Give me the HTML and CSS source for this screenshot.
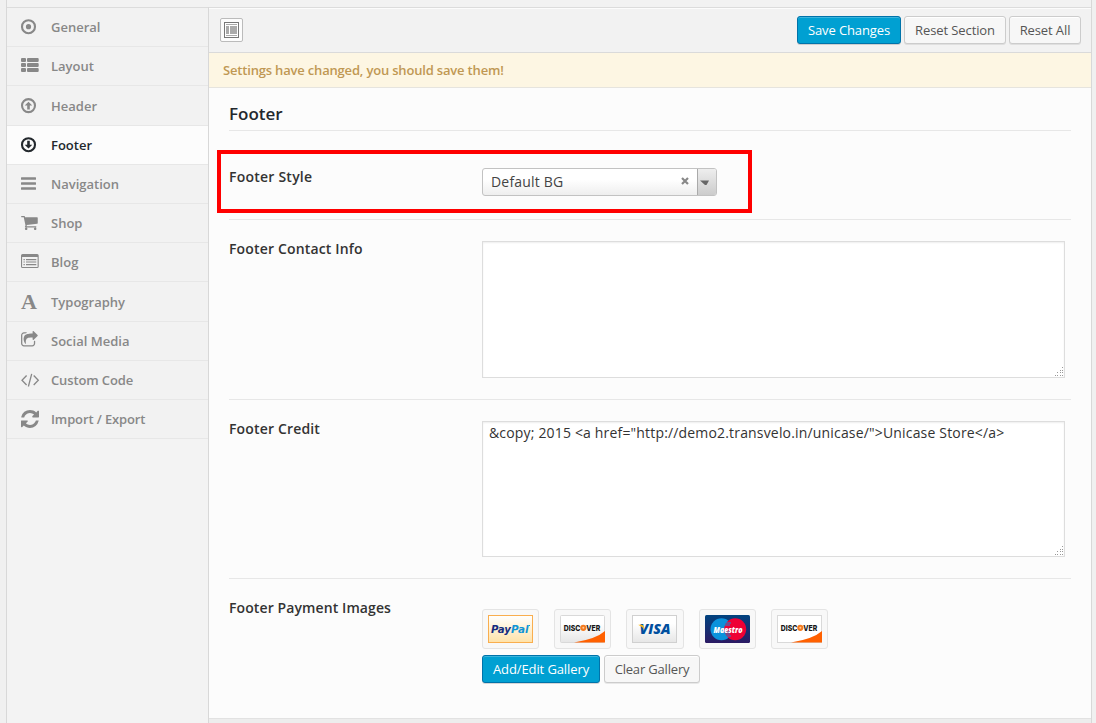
FILE: index.html
```html
<!DOCTYPE html>
<html lang="en">
<head>
<meta charset="utf-8">
<title>Theme Options</title>
<link rel="stylesheet" href="styles.css">
</head>
<body>
<div class="panel">
  <nav class="sidebar">
    <a class="item"><svg class="icon" viewBox="0 0 20 20"><circle class="line" cx="8.5" cy="9.7" r="6.5"/><circle cx="8.5" cy="9.7" r="2.6"/></svg><span>General</span></a>
    <a class="item"><svg class="icon" viewBox="0 0 20 20"><rect x="1" y="2" width="5" height="4" rx="1"/><rect x="7" y="2" width="11.700" height="4" rx="1"/><rect x="1" y="7" width="5" height="4" rx="1"/><rect x="7" y="7" width="11.700" height="4" rx="1"/><rect x="1" y="12" width="5" height="4" rx="1"/><rect x="7" y="12" width="11.700" height="4" rx="1"/></svg><span>Layout</span></a>
    <a class="item tall"><svg class="icon" viewBox="0 0 20 20"><circle class="line" cx="8.5" cy="10.6" r="6.5"/><path d="M8.500 6.700l3.800 3.900H9.800v3.900H7.200v-3.900H4.700z"/></svg><span>Header</span></a>
    <a class="item active"><svg class="icon" viewBox="0 0 20 20"><circle class="line" cx="8.500" cy="9.700" r="6.500"/><path d="M8.500 13.600l3.800-3.900H9.800V5.800H7.200v3.900H4.700z"/></svg><span>Footer</span></a>
    <a class="item"><svg class="icon" viewBox="0 0 20 20"><rect x="1" y="3.300" width="15" height="2.500" rx=".5"/><rect x="1" y="8.300" width="15" height="2.500" rx=".5"/><rect x="1" y="13.300" width="15" height="2.500" rx=".5"/></svg><span>Navigation</span></a>
    <a class="item"><svg class="icon" viewBox="0 0 20 20"><path transform="translate(.4 .4) scale(.01004)" d="M704 1536q0 52-38 90t-90 38-90-38-38-90 38-90 90-38 90 38 38 90zm896 0q0 52-38 90t-90 38-90-38-38-90 38-90 90-38 90 38 38 90zm128-1088v512q0 24-16.500 42.500t-40.500 21.500l-1044 122q13 60 13 70 0 16-24 64h920q26 0 45 19t19 45-19 45-45 19h-1024q-26 0-45-19t-19-45q0-11 8-31.500t16-36 21.500-40 15.500-29.500l-177-823h-204q-26 0-45-19t-19-45 19-45 45-19h256q16 0 28.500 6.500t19.500 15.500 13 24.500 8 26 5.500 29.500 4.500 26h1201q26 0 45 19t19 45z"/></svg><span>Shop</span></a>
    <a class="item"><svg class="icon" viewBox="0 0 20 20"><path fill-rule="evenodd" d="M2.500 2h14.700q1.500 0 1.500 1.500v11q0 1.500-1.500 1.500H2.500Q1 16 1 14.500v-11Q1 2 2.500 2zM2.100 5.100v9.800h15.500V5.100z"/><path d="M3.500 7h1.300v1.200H3.500zM6 7h10.300v1.200H6zM3.500 9.400h1.300v1.200H3.500zM6 9.400h10.300v1.200H6zM3.500 12h1.300v1.200H3.500zM6 12h10.300v1.200H6z"/></svg><span>Blog</span></a>
    <a class="item tall"><span class="icon letter">A</span><span>Typography</span></a>
    <a class="item"><svg class="icon" viewBox="0 0 20 20"><path transform="translate(.4 0) scale(.01004)" d="M1472 989v259q0 119-84.500 203.500t-203.500 84.500h-832q-119 0-203.500-84.500t-84.500-203.500v-832q0-119 84.500-203.500t203.500-84.500h255q13 0 22.500 9.500t9.500 22.500q0 27-26 32-77 26-133 60-10 4-16 4h-112q-66 0-113 47t-47 113v832q0 66 47 113t113 47h832q66 0 113-47t47-113v-214q0-19 18-29 28-13 54-37 16-16 35-8 21 9 21 29zm237-496l-384 384q-18 19-45 19-12 0-25-5-39-17-39-59v-192h-160q-323 0-438 131-119 137-74 473 3 23-20 34-8 2-12 2-16 0-26-13-10-14-21-31t-39.500-68.500-49.500-99.500-38.500-114-17.500-122q0-49 3.500-91t14-90 28-88 47-81.500 68.500-74 94.500-61.500 124.500-48.500 159.500-30.500 196.500-11h160v-192q0-42 39-59 13-5 25-5 26 0 45 19l384 384q19 19 19 45t-19 45z"/></svg><span>Social Media</span></a>
    <a class="item"><svg class="icon" viewBox="0 0 20 20"><path class="thin" d="M6.600 5.500L2 10.300l4.600 4.700M13.700 5.500l4.600 4.800-4.600 4.700M11.700 3.900L8.400 16.500"/></svg><span class="narrow">Custom Code</span></a>
    <a class="item"><svg class="icon" viewBox="0 0 20 20"><path transform="translate(-.5 -.6) scale(.01172)" d="M1639 1056q0 5-1 7-64 268-268 434.500t-478 166.500q-146 0-282.500-55t-243.500-157l-129 129q-19 19-45 19t-45-19-19-45v-448q0-26 19-45t45-19h448q26 0 45 19t19 45-19 45l-137 137q71 66 161 102t187 36q134 0 250-65t186-179q11-17 53-117 8-23 30-23h192q13 0 22.500 9.500t9.500 22.500zm25-800v448q0 26-19 45t-45 19h-448q-26 0-45-19t-19-45 19-45l138-138q-148-137-349-137-134 0-250 65t-186 179q-11 17-53 117-8 23-30 23h-199q-13 0-22.500-9.500t-9.500-22.500v-7q65-268 270-434.500t480-166.500q146 0 284 55.500t245 156.500l130-129q19-19 45-19t45 19 19 45z"/></svg><span class="narrow">Import / Export</span></a>
  </nav>
  <main class="main">
    <header class="toolbar">
      <button class="expand"><svg width="15" height="16" viewBox="0 0 15 16"><rect class="frame" x=".5" y=".5" width="14" height="15"/><path class="blocks" d="M2 2h11v1H2zM2 4h3v8H2zM6 4h7v8H6zM2 13h11v1H2z"/></svg></button>
      <div class="actions">
        <button class="btn primary save">Save Changes</button>
        <button class="btn section">Reset Section</button>
        <button class="btn all">Reset All</button>
      </div>
    </header>
    <div class="notice">Settings have changed, you should save them!</div>
    <section class="content">
      <h2 class="title">Footer</h2>
      <div class="row style-row">
        <div class="highlight"></div>
        <div class="label">Footer Style</div>
        <div class="select">
          <span class="value">Default BG</span>
          <svg class="clear" width="8" height="8" viewBox="0 0 8 8"><path d="M1 1l6 6M7 1L1 7"/></svg>
          <span class="arrow"><svg width="9" height="6" viewBox="0 0 9 6"><path d="M0 .5h9L6.500 5H5z"/></svg></span>
        </div>
      </div>
      <div class="row contact-row">
        <div class="label">Footer Contact Info</div>
        <div class="field"><textarea class="area first"></textarea><svg class="grip" viewBox="0 0 10 10"><path d="M8 0h1v1H8zM6 3h1v1H6zM8 3h1v1H8zM3 5h1v1H3zM6 5h1v1H6zM8 5h1v1H8zM1 8h1v1H1zM3 8h1v1H3zM6 8h1v1H6zM8 8h1v1H8z"/></svg></div>
      </div>
      <div class="row credit-row">
        <div class="label">Footer Credit</div>
        <div class="field"><textarea class="area second" spellcheck="false">&amp;copy; 2015 &lt;a href="http://demo2.transvelo.in/unicase/"&gt;Unicase Store&lt;/a&gt;</textarea><svg class="grip" viewBox="0 0 10 10"><path d="M8 0h1v1H8zM6 3h1v1H6zM8 3h1v1H8zM3 5h1v1H3zM6 5h1v1H6zM8 5h1v1H8zM1 8h1v1H1zM3 8h1v1H3zM6 8h1v1H6zM8 8h1v1H8z"/></svg></div>
      </div>
      <div class="row payment-row">
        <div class="label">Footer Payment Images</div>
        <div class="gallery">
          <div class="thumbs">
            <div class="thumb"><svg class="card" viewBox="0 0 45 28">
              <defs>
                <linearGradient id="cream" x2="0" y2="1"><stop offset="0" stop-color="#fff"/><stop offset="1" stop-color="#ffe2a8"/></linearGradient>
                <linearGradient id="silver" x2="0" y2="1"><stop offset=".3" stop-color="#fff"/><stop offset="1" stop-color="#e6e6e6"/></linearGradient>
                <linearGradient id="navy" x2="0" y2="1"><stop offset="0" stop-color="#00437f"/><stop offset="1" stop-color="#2b1a63"/></linearGradient>
              </defs>
              <rect x=".5" y=".5" width="44" height="27" fill="url(#cream)" stroke="#f9ae4e"/>
              <text class="paypal" x="3" y="18" fill="#152c80" textLength="20" lengthAdjust="spacingAndGlyphs">Pay</text><text class="paypal" x="23" y="18" fill="#0f94d6" textLength="17.500" lengthAdjust="spacingAndGlyphs">Pal</text><path d="M41 10.500h1" stroke="#0f94d6"/>
            </svg></div>
            <div class="thumb"><svg class="card" viewBox="0 0 45 28"><rect x=".5" y=".5" width="44" height="27" rx="1" fill="url(#silver)" stroke="#d9d9d9"/><path d="M14 27.500Q36 24 45 16v11.500z" fill="#ff6000"/><text class="discover" x="3.800" y="15.700" textLength="16.500" lengthAdjust="spacingAndGlyphs">DISC</text><circle cx="23.300" cy="12.800" r="3.100" fill="#f47b20"/><circle cx="23.300" cy="12.800" r="1" fill="#ffc99a"/><text class="discover" x="26.300" y="15.700" textLength="14" lengthAdjust="spacingAndGlyphs">VER</text></svg></div>
            <div class="thumb"><svg class="card" viewBox="0 0 45 28"><rect x=".5" y=".5" width="44" height="27" fill="url(#silver)" stroke="#d0d0d0"/><text class="visa" x="7.500" y="19.300" textLength="31" lengthAdjust="spacingAndGlyphs">VISA</text><path d="M6.500 9.700h3.500l1.500 1.200.7 3.600q-1.500-3-5.700-4.500z" fill="#fdb913"/></svg></div>
            <div class="thumb"><svg class="card" viewBox="0 0 45 28"><rect width="45" height="28" rx="1.500" fill="url(#navy)"/><circle cx="16.500" cy="14.300" r="11" fill="#0b92dc"/><circle cx="30.200" cy="14.300" r="11" fill="#ee0035"/><path d="M21 8h5M20 10h5M20 17h5M20 19h5M21 21h5" stroke="#0b92dc"/><text class="maestro" x="8.500" y="17.500" textLength="29" lengthAdjust="spacingAndGlyphs">Maestro</text></svg></div>
            <div class="thumb"><svg class="card" viewBox="0 0 45 28"><rect x=".5" y=".5" width="44" height="27" fill="#fff" stroke="#d9d9d9"/><path d="M14 27.500Q36 24 45 16v11.500z" fill="#ff6000"/><text class="discover" x="3.800" y="15.700" textLength="16.500" lengthAdjust="spacingAndGlyphs">DISC</text><circle cx="23.300" cy="12.800" r="3.100" fill="#f47b20"/><circle cx="23.300" cy="12.800" r="1" fill="#ffc99a"/><text class="discover" x="26.300" y="15.700" textLength="14" lengthAdjust="spacingAndGlyphs">VER</text></svg></div>
          </div>
          <div class="gallery-actions">
            <button class="btn primary edit">Add/Edit Gallery</button>
            <button class="btn clear-btn">Clear Gallery</button>
          </div>
        </div>
      </div>
    </section>
    <footer class="bottom"></footer>
  </main>
</div>
</body>
</html>
```
FILE: styles.css
```css
* { box-sizing: border-box; }

body {
  margin: 0;
  height: 723px;
  overflow: hidden;
  padding: 0 4px 0 6px;
  background: #f0f0f0;
  font-family: "Open Sans", "Noto Sans", sans-serif;
  font-size: 13px;
  color: #333;
}

.panel {
  display: flex;
  height: 723px;
  padding-top: 7px;
  background: linear-gradient(#f2f2f2 7px, #dcdcdc 7px, #dcdcdc 8px, #f3f3f3 8px);
  border-left: 1px solid #d8d8d8;
  border-right: 1px solid #d8d8d8;
}

/* Sidebar */
.sidebar {
  width: 202px;
  flex: none;
  padding-top: 1px;
  border-right: 1px solid #d8d8d8;
}

.item {
  display: flex;
  align-items: center;
  gap: 11px;
  height: 39px;
  padding-left: 13px;
  border-bottom: 1px solid #e7e7e7;
  background: #f2f2f2;
  color: #888;
  font-weight: 600;
  line-height: 18px;
}

.item.tall { height: 40px; }

.item.active {
  background: #fcfcfc;
  color: #23282d;
}

.narrow { letter-spacing: -.12px; }

.icon {
  width: 20px;
  height: 20px;
  flex: none;
  align-self: flex-start;
  margin-top: 9px;
  fill: currentColor;
}

.line { fill: none; stroke: currentColor; stroke-width: 2.1; }
.thin { fill: none; stroke: currentColor; stroke-width: 1.3; }

.letter {
  height: 24px;
  margin-top: 8px;
  padding-left: 1px;
  font: bold 22px/24px "Liberation Serif", serif;
}

/* Main column */
.main {
  flex: 1;
  display: flex;
  flex-direction: column;
  padding-top: 1px;
}

.toolbar {
  display: flex;
  justify-content: space-between;
  height: 45px;
  padding: 7px 10px 0 11px;
  border-top: 1px solid #fcfcfc;
  border-bottom: 1px solid #dadada;
  background: #f2f2f2;
}

.expand {
  display: flex;
  align-items: center;
  justify-content: center;
  width: 23px;
  height: 24px;
  margin-top: 2px;
  padding: 0;
  border: 1px solid #bbb;
  border-radius: 2px;
  background: #fcfcfc;
}

.frame { fill: #fff; stroke: #777; }
.blocks { fill: #aaa; }

.actions { display: flex; gap: 3px; }

.btn {
  height: 28px;
  padding: 0;
  border: 1px solid #ccc;
  border-radius: 3px;
  background: #f7f7f7;
  box-shadow: inset 0 1px 0 #fff, 0 1px 0 rgba(0, 0, 0, .08);
  color: #555;
  font: 13px/26px "Open Sans", sans-serif;
  letter-spacing: -.1px;
}

.btn.primary {
  border-color: #0073aa;
  background: #00a0d2;
  box-shadow: inset 0 1px 0 rgba(120, 200, 230, .5), 0 1px 0 rgba(0, 0, 0, .15);
  color: #fff;
}

.save { width: 104px; }
.section { width: 102px; }
.all { width: 72px; }
.edit { width: 118px; }
.btn.clear-btn { width: 96px; letter-spacing: -.18px; }

.notice {
  height: 35px;
  padding-left: 14px;
  border-bottom: 1px solid #e6e4de;
  background: #fdf6e3;
  color: #c09853;
  font-weight: 600;
  letter-spacing: -.18px;
  line-height: 35px;
}

.content {
  height: 630px;
  padding: 0 20px;
  background: #fcfcfc;
}

.title {
  height: 43px;
  margin: 0;
  border-bottom: 1px solid #e7e7e7;
  color: #23282d;
  font-size: 17px;
  font-weight: 600;
  line-height: 52px;
}

.row {
  position: relative;
  display: flex;
  border-bottom: 1px solid #e7e7e7;
}

.label {
  width: 253px;
  flex: none;
  font-size: 14px;
  font-weight: 600;
  letter-spacing: .16px;
  line-height: 20px;
}

.style-row { height: 89px; padding-top: 37px; }
.contact-row { height: 180px; padding-top: 21px; }
.credit-row { height: 179px; padding-top: 21px; }
.payment-row { padding-top: 21px; border: 0; }
.style-row .label { margin-top: -1px; letter-spacing: .23px; }
.contact-row .label, .credit-row .label { margin-top: -2px; }
.payment-row .label { margin-top: -2px; letter-spacing: .1px; }

.highlight {
  position: absolute;
  left: -12px;
  top: 19px;
  width: 535px;
  height: 63px;
  border: 4px solid #f00;
}

.select {
  display: flex;
  align-items: center;
  width: 235px;
  height: 28px;
  border: 1px solid #c2c2c2;
  border-radius: 3px;
  background: linear-gradient(#fff 40%, #eee);
  overflow: hidden;
}

.value {
  flex: 1;
  padding-left: 8px;
  color: #444;
  font-size: 14px;
  letter-spacing: .2px;
  line-height: 26px;
}

.clear {
  margin: 0 8px 2px 0;
  fill: none;
  stroke: #888;
  stroke-width: 2.2;
}

.arrow {
  display: flex;
  align-items: center;
  width: 20px;
  height: 26px;
  margin-right: -1px;
  padding-left: 2px;
  border-left: 1px solid #aaa;
  background: linear-gradient(#eee, #ccc);
}

.arrow svg { fill: #666; margin-top: 1px; }

.field { position: relative; width: 583px; }

.area {
  display: block;
  width: 583px;
  height: 137px;
  padding: 1px 6px;
  border: 1px solid #ddd;
  background: #fff;
  box-shadow: inset 0 1px 2px rgba(0, 0, 0, .07);
  color: #333;
  font: 14px/19px "Open Sans", sans-serif;
  letter-spacing: .17px;
  resize: none;
}

.area.second { height: 136px; }

.grip {
  position: absolute;
  right: 1px;
  top: 126px;
  width: 10px;
  height: 10px;
  fill: #999;
}

.second + .grip { top: 125px; }

.gallery { padding-top: 9px; }

.thumbs { display: flex; gap: 15px; width: 346px; }

.thumb {
  flex: 1;
  height: 40px;
  padding: 5px;
  border: 1px solid #e4e4e4;
  border-radius: 3px;
  background: #f8f8f8;
}

.card { display: block; width: 45px; height: 28px; }
.paypal { font: italic bold 10.500px "DejaVu Sans", sans-serif; }
.discover { font: 800 8px Inter, sans-serif; fill: #161616; }
.visa { font: italic 800 13.500px "Open Sans", sans-serif; fill: #004f9f; }
.maestro { font: italic 800 8.500px "Open Sans", sans-serif; fill: #fff; }

.gallery-actions { display: flex; gap: 4px; margin-top: 6px; }

.bottom {
  flex: 1;
  border-top: 1px solid #e2e2e2;
  background: #ededed;
}
```
